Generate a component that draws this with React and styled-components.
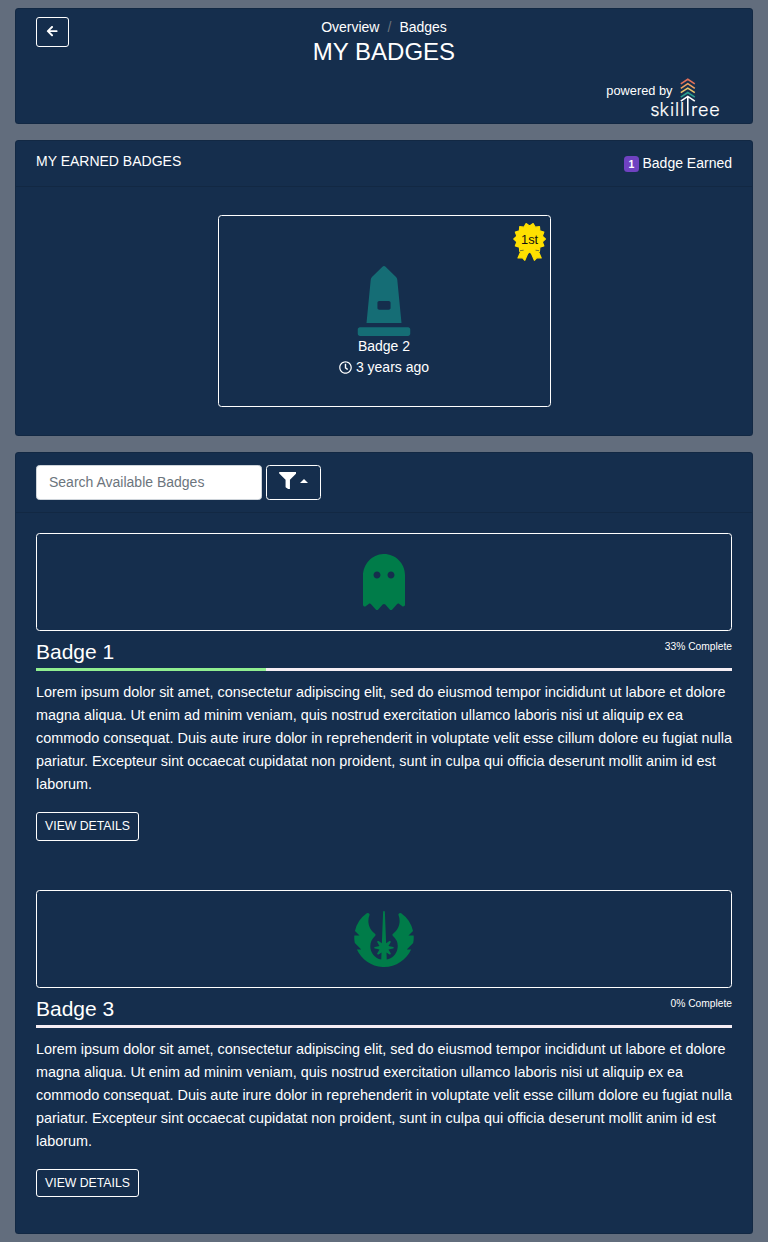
import React from "react";
import styled, { createGlobalStyle } from "styled-components";
import { FaArrowLeft, FaMonument, FaGhost, FaJedi, FaFilter, FaRegClock } from "react-icons/fa";

const GlobalStyle = createGlobalStyle`
  *, *::before, *::after { box-sizing: border-box; }
  html { font-size: 14px; }
  body {
    margin: 0;
    background: #626d7d;
    color: #fff;
    font-family: "Liberation Sans", Arial, sans-serif;
    font-size: 1rem;
    line-height: 1.5;
  }
`;

const Page = styled.main`
  display: flex;
  flex-direction: column;
  gap: 16px;
  padding: 8px 15px;
`;

const Card = styled.section`
  height: ${(p) => p.$height}px;
  border: 1px solid rgba(0, 0, 0, 0.125);
  border-radius: 3.5px;
  background: #152e4d;
  background-clip: border-box;
`;

const TitleCard = styled(Card)`
  display: grid;
  grid-template-columns: 1fr auto 1fr;
  grid-template-rows: 59px 48px;
  padding: 8px 20px 0;
`;

const OutlineButton = styled.button`
  display: inline-flex;
  align-items: center;
  justify-content: center;
  width: ${(p) => p.$width}px;
  height: ${(p) => p.$height}px;
  padding: 0 0 ${(p) => p.$lift ?? 2}px;
  border: 1px solid #fff;
  border-radius: ${(p) => p.$radius || 3}px;
  background: transparent;
  color: #fff;
  font: 12.25px "Liberation Sans", Arial, sans-serif;
`;

const Heading = styled.div`
  text-align: center;
`;

const Crumbs = styled.nav`
  display: flex;
  justify-content: center;
  gap: 8px;
  line-height: 21px;
`;

const Slash = styled.span`
  color: #6c757d;
`;

const Title = styled.h1`
  margin: 0;
  font-size: 24px;
  font-weight: 400;
  line-height: 28px;
`;

const PoweredBy = styled.div`
  grid-column: 1 / -1;
  justify-self: end;
  display: flex;
  align-items: flex-start;
  margin-right: 8px;
  font-size: 12.8px;
  line-height: 29px;
`;

const Logo = styled.svg`
  display: block;
  margin-left: -22.5px;
`;

const CardHeader = styled.header`
  display: flex;
  justify-content: space-between;
  height: ${(p) => p.$height}px;
  padding: 12px 20px 0;
  border-bottom: 1px solid rgba(0, 0, 0, 0.125);
`;

const SectionTitle = styled.h2`
  margin: 0;
  font-size: 14px;
  font-weight: 400;
  line-height: 17px;
`;

const EarnedCount = styled.div`
  display: flex;
  gap: 3.5px;
  line-height: 21px;
`;

const CountPill = styled.span`
  width: 15px;
  height: 16px;
  margin-top: 3px;
  border-radius: 3.5px;
  background: #6f42c1;
  font-size: 10.5px;
  font-weight: 700;
  line-height: 17px;
  text-align: center;
`;

const EarnedTile = styled.article`
  position: relative;
  display: flex;
  flex-direction: column;
  align-items: center;
  width: 333px;
  height: 192px;
  margin: 28px auto 0;
  padding-top: 49.5px;
  border: 1px solid #fff;
  border-radius: 3.5px;
`;

const Ribbon = styled.svg`
  position: absolute;
  top: 6px;
  right: 3px;
`;

const Age = styled.div`
  display: flex;
  align-items: center;
  gap: 4px;
`;

const SearchRow = styled.div`
  display: flex;
  gap: 4px;
`;

const SearchInput = styled.input`
  width: 226px;
  height: 35px;
  padding: 0 12px 2px;
  border: 1px solid #ced4da;
  border-radius: 3.5px;
  background: #fff;
  font: 14px "Liberation Sans", Arial, sans-serif;
  &::placeholder { color: #6c757d; opacity: 1; }
`;

const FilterButton = styled(OutlineButton)`
  gap: 4px;
  padding-bottom: 4px;
`;

const Caret = styled.span`
  border: 4px solid transparent;
  border-top: 0;
  border-bottom-color: #fff;
`;

const BadgeItem = styled.article`
  height: 357px;
  padding: 20px 20px 0;
`;

const IconFrame = styled.div`
  display: flex;
  align-items: center;
  justify-content: center;
  height: 98px;
  border: 1px solid #fff;
  border-radius: 3.5px;
  color: #007c49;

  svg {
    width: 64px;
    height: 56px;
  }
`;

const BadgeTop = styled.div`
  display: flex;
  justify-content: space-between;
  height: 37px;
  padding-top: 8px;
`;

const BadgeName = styled.h3`
  margin: 0;
  font-size: 21px;
  font-weight: 400;
  line-height: 26px;
`;

const Percent = styled.span`
  font-size: 10.24px;
  line-height: 16px;
`;

const Progress = styled.div`
  height: 3px;
  background: #f5eef4;
`;

const ProgressFill = styled.div`
  width: ${(p) => p.$value}%;
  height: 3px;
  background: #90ee90;
`;

const Description = styled.p`
  margin: 10px -2px 16px 0;
  font-size: 14.4px;
  line-height: 23px;
`;

const CHEVRONS = [
  ["#e0705a", 7.9],
  ["#f0a060", 12.3],
  ["#e9c46a", 16.7],
  ["#2a9d8f", 21.1],
];

function SkillTreeLogo() {
  return (
    <Logo width="74" height="47" viewBox="0 0 74 47">
      <g fill="none" strokeWidth="1.6">
        {CHEVRONS.map(([color, y]) => (
          <path key={color} stroke={color} d={`M30.8 ${y} L37.8 ${y - 4.6} L44.8 ${y}`} />
        ))}
        <path stroke="#fff" d="M30.8 25.2 L37.8 20.4 L44.8 25.2 M37.8 20.4 V39.6" />
      </g>
      <text
        x="0.2 9.6 20.1 25.1 30.1 41.1 47.9 59.3"
        y="39.5"
        fill="#fff"
        stroke="#fff"
        strokeWidth="0.2"
        fontFamily="Inter, sans-serif"
        fontSize="18"
        fontWeight="300"
      >
        skillree
      </text>
    </Logo>
  );
}

const SEAL_POINTS = Array.from({ length: 28 }, (_, i) => {
  const radius = i % 2 ? 13.1 : 15.8;
  const angle = (i * Math.PI) / 14;
  return `${(16.6 + radius * Math.cos(angle)).toFixed(2)},${(17 + radius * Math.sin(angle)).toFixed(2)}`;
}).join(" ");

function FirstPlaceRibbon() {
  return (
    <Ribbon width="34" height="40" viewBox="0 0 34 40">
      <g fill="#ffe000" stroke="#ffe000" strokeWidth="1.2" strokeLinejoin="round">
        <polygon points={SEAL_POINTS} />
        <path d="M8 29 L15.6 29.5 L11.8 38.3 L9.3 35.6 L5 36 Z M25.2 29 L17.6 29.5 L21.4 38.3 L23.9 35.6 L28.2 36 Z" />
      </g>
      <path d="M7 28.7 L10.6 28.2 M22.6 28.2 L26.2 28.7" stroke="#4f5a38" strokeWidth=".8" />
      <text x="16.6" y="21.5" textAnchor="middle" fontSize="12.8" fill="#111">
        1st
      </text>
    </Ribbon>
  );
}

const LOREM =
  "Lorem ipsum dolor sit amet, consectetur adipiscing elit, sed do eiusmod tempor incididunt ut labore et dolore magna aliqua. Ut enim ad minim veniam, quis nostrud exercitation ullamco laboris nisi ut aliquip ex ea commodo consequat. Duis aute irure dolor in reprehenderit in voluptate velit esse cillum dolore eu fugiat nulla pariatur. Excepteur sint occaecat cupidatat non proident, sunt in culpa qui officia deserunt mollit anim id est laborum.";

const BADGES = [
  { name: "Badge 1", percent: 33, Icon: FaGhost, buttonHeight: 29, lift: 2 },
  { name: "Badge 3", percent: 0, Icon: FaJedi, buttonHeight: 28, lift: 0 },
];

export default function App() {
  return (
    <>
      <GlobalStyle />
      <Page>
        <TitleCard $height={116}>
          <OutlineButton $width={33} $height={30} $lift={1.5} aria-label="Back">
            <FaArrowLeft size={12.25} />
          </OutlineButton>
          <Heading>
            <Crumbs>
              <span>Overview</span>
              <Slash>/</Slash>
              <span>Badges</span>
            </Crumbs>
            <Title>MY BADGES</Title>
          </Heading>
          <PoweredBy>
            <span>powered by</span>
            <SkillTreeLogo />
          </PoweredBy>
        </TitleCard>

        <Card $height={296}>
          <CardHeader $height={46}>
            <SectionTitle>MY EARNED BADGES</SectionTitle>
            <EarnedCount>
              <CountPill>1</CountPill>
              Badge Earned
            </EarnedCount>
          </CardHeader>
          <EarnedTile>
            <FirstPlaceRibbon />
            <FaMonument size={70} color="#156d75" />
            <div>Badge 2</div>
            <Age>
              <FaRegClock size={13} />
              3 years ago
            </Age>
          </EarnedTile>
        </Card>

        <Card $height={782}>
          <CardHeader $height={60}>
            <SearchRow>
              <SearchInput placeholder="Search Available Badges" />
              <FilterButton $width={55} $height={35} $radius={3.5} aria-label="Filter">
                <FaFilter size={17.5} />
                <Caret />
              </FilterButton>
            </SearchRow>
          </CardHeader>
          {BADGES.map(({ name, percent, Icon, buttonHeight, lift }) => (
            <BadgeItem key={name}>
              <IconFrame>
                <Icon />
              </IconFrame>
              <BadgeTop>
                <BadgeName>{name}</BadgeName>
                <Percent>{percent}% Complete</Percent>
              </BadgeTop>
              <Progress>
                <ProgressFill $value={percent} />
              </Progress>
              <Description>{LOREM}</Description>
              <OutlineButton $width={103} $height={buttonHeight} $lift={lift}>
                VIEW DETAILS
              </OutlineButton>
            </BadgeItem>
          ))}
        </Card>
      </Page>
    </>
  );
}
